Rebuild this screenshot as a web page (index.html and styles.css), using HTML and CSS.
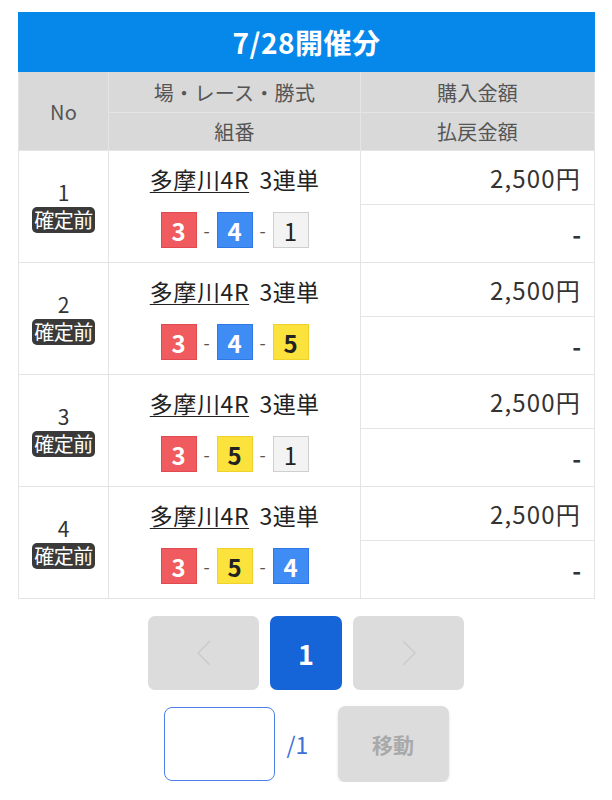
FILE: index.html
```html
<!DOCTYPE html>
<html lang="ja">
<head>
<meta charset="utf-8">
<link rel="stylesheet" href="styles.css">
</head>
<body>
<div class="page">
  <table class="bets">
    <colgroup>
      <col class="col-no">
      <col class="col-mid">
      <col class="col-amt">
    </colgroup>
    <thead>
      <tr class="title-row"><th colspan="3" class="title">7/28開催分</th></tr>
      <tr class="head-row1">
        <th rowspan="2">No</th>
        <th>場・レース・勝式</th>
        <th>購入金額</th>
      </tr>
      <tr class="head-row2">
        <th>組番</th>
        <th>払戻金額</th>
      </tr>
    </thead>
    <tbody>
      <tr class="row-a">
        <td rowspan="2" class="no-cell"><div class="no-num">1</div><span class="badge">確定前</span></td>
        <td rowspan="2" class="mid-cell">
          <div class="race"><span class="venue">多摩川4R</span> 3連単</div>
          <div class="combo"><span class="box b3">3</span><span class="dash">-</span><span class="box b4">4</span><span class="dash">-</span><span class="box b1">1</span></div>
        </td>
        <td class="amt">2,500円</td>
      </tr>
      <tr class="row-b"><td class="pay">-</td></tr>

      <tr class="row-a">
        <td rowspan="2" class="no-cell"><div class="no-num">2</div><span class="badge">確定前</span></td>
        <td rowspan="2" class="mid-cell">
          <div class="race"><span class="venue">多摩川4R</span> 3連単</div>
          <div class="combo"><span class="box b3">3</span><span class="dash">-</span><span class="box b4">4</span><span class="dash">-</span><span class="box b5">5</span></div>
        </td>
        <td class="amt">2,500円</td>
      </tr>
      <tr class="row-b"><td class="pay">-</td></tr>

      <tr class="row-a">
        <td rowspan="2" class="no-cell"><div class="no-num">3</div><span class="badge">確定前</span></td>
        <td rowspan="2" class="mid-cell">
          <div class="race"><span class="venue">多摩川4R</span> 3連単</div>
          <div class="combo"><span class="box b3">3</span><span class="dash">-</span><span class="box b5">5</span><span class="dash">-</span><span class="box b1">1</span></div>
        </td>
        <td class="amt">2,500円</td>
      </tr>
      <tr class="row-b"><td class="pay">-</td></tr>

      <tr class="row-a">
        <td rowspan="2" class="no-cell"><div class="no-num">4</div><span class="badge">確定前</span></td>
        <td rowspan="2" class="mid-cell">
          <div class="race"><span class="venue">多摩川4R</span> 3連単</div>
          <div class="combo"><span class="box b3">3</span><span class="dash">-</span><span class="box b5">5</span><span class="dash">-</span><span class="box b4">4</span></div>
        </td>
        <td class="amt">2,500円</td>
      </tr>
      <tr class="row-b"><td class="pay">-</td></tr>
    </tbody>
  </table>

  <div class="pager">
    <div class="pbtn nav"><svg width="20" height="28" viewBox="0 0 20 28"><path d="M16 2 L4 14 L16 26" fill="none" stroke="#c9c9c9" stroke-width="1.3"/></svg></div>
    <div class="pbtn current">1</div>
    <div class="pbtn nav"><svg width="20" height="28" viewBox="0 0 20 28"><path d="M4 2 L16 14 L4 26" fill="none" stroke="#c9c9c9" stroke-width="1.3"/></svg></div>
  </div>

  <div class="jump">
    <div class="jump-input"></div>
    <span class="total">/1</span>
    <div class="jump-btn">移動</div>
  </div>
</div>
</body>
</html>
```

FILE: styles.css
```css
* { box-sizing: border-box; }
body {
  margin: 0;
  background: #fff;
  font-family: "Noto Sans CJK JP", "Noto Sans", sans-serif;
  color: #333;
}
.page {
  padding: 12px 18px 0 18px;
}
.bets {
  width: 576px;
  border-collapse: collapse;
  table-layout: fixed;
}
.bets th, .bets td {
  border: 1px solid #e4e4e4;
  padding: 0;
  text-align: center;
}
.col-no { width: 90px; }
.col-mid { width: 252px; }
.col-amt { width: 234px; }

.title-row { height: 59px; }
.bets .title {
  background: #0688ea;
  color: #fff;
  font-size: 28px;
  font-weight: bold;
  letter-spacing: 0.5px;
  border-color: #0688ea;
}
.head-row1 { height: 41px; }
.head-row2 { height: 38px; }
.head-row1 th, .head-row2 th {
  background: #d9d9d9;
  color: #555;
  font-weight: normal;
  font-size: 20px;
  letter-spacing: 0.3px;
}
.row-a { height: 54px; }
.row-b { height: 58px; }

.no-cell {
  vertical-align: middle;
}
.no-num {
  font-size: 21px;
  line-height: 24px;
  color: #333;
  margin-top: 0;
}
.badge {
  display: inline-block;
  margin-top: 3px;
  background: #3a3a3a;
  color: #fff;
  border-radius: 5px;
  font-size: 20px;
  line-height: 26px;
  padding: 0 2px;
  letter-spacing: -0.5px;
}
.mid-cell {
  vertical-align: top;
}
.race {
  margin-top: 13px;
  font-size: 23px;
  line-height: 30px;
  color: #222;
  word-spacing: 5px;
  letter-spacing: 0.3px;
}
.venue {
  text-decoration: underline;
  text-underline-offset: 3px;
  text-decoration-thickness: 1px;
  letter-spacing: 0.6px;
}
.combo {
  margin-top: 18px;
  display: flex;
  justify-content: center;
  align-items: center;
}
.box {
  width: 36px;
  height: 36px;
  display: flex;
  align-items: center;
  justify-content: center;
  font-size: 24px;
  font-weight: bold;
  border: 1px solid;
}
.b3 { background: #ef5b5f; border-color: #e04a4e; color: #fff; }
.b4 { background: #3f8cf5; border-color: #3078e6; color: #fff; }
.b5 { background: #fbe23c; border-color: #eed22a; color: #222; }
.b1 { background: #f3f3f3; border-color: #cfcfcf; color: #222; font-weight: normal; }
.dash {
  width: 20px;
  text-align: center;
  color: #555;
  font-size: 18px;
}
.bets .amt {
  text-align: right;
  padding-right: 13px;
  font-size: 24px;
  letter-spacing: 1.2px;
  color: #333;
}
.bets .pay {
  text-align: right;
  padding-right: 13px;
  font-size: 24px;
  font-weight: bold;
  color: #333;
}

.pager {
  display: flex;
  justify-content: center;
  gap: 11px;
  margin-top: 17px;
}
.pbtn {
  height: 74px;
  border-radius: 7px;
  display: flex;
  align-items: center;
  justify-content: center;
}
.pbtn.nav {
  width: 111px;
  background: #dcdcdc;
}
.pbtn.current {
  width: 72px;
  background: #1565d8;
  color: #fff;
  font-size: 27px;
  font-weight: bold;
}
.jump {
  display: flex;
  justify-content: center;
  align-items: center;
  margin-top: 16px;
}
.jump-input {
  width: 111px;
  height: 74px;
  border: 1.5px solid #4d80e4;
  border-radius: 8px;
  background: #fff;
}
.total {
  width: 63px;
  text-align: left;
  padding-left: 12px;
  color: #3d6fd6;
  font-size: 23px;
}
.jump-btn {
  width: 111px;
  height: 76px;
  border-radius: 8px;
  background: #dcdcdc;
  color: #a9a9a9;
  font-size: 21px;
  font-weight: bold;
  display: flex;
  align-items: center;
  justify-content: center;
  box-shadow: 0 1px 3px rgba(0,0,0,0.12);
}
```
